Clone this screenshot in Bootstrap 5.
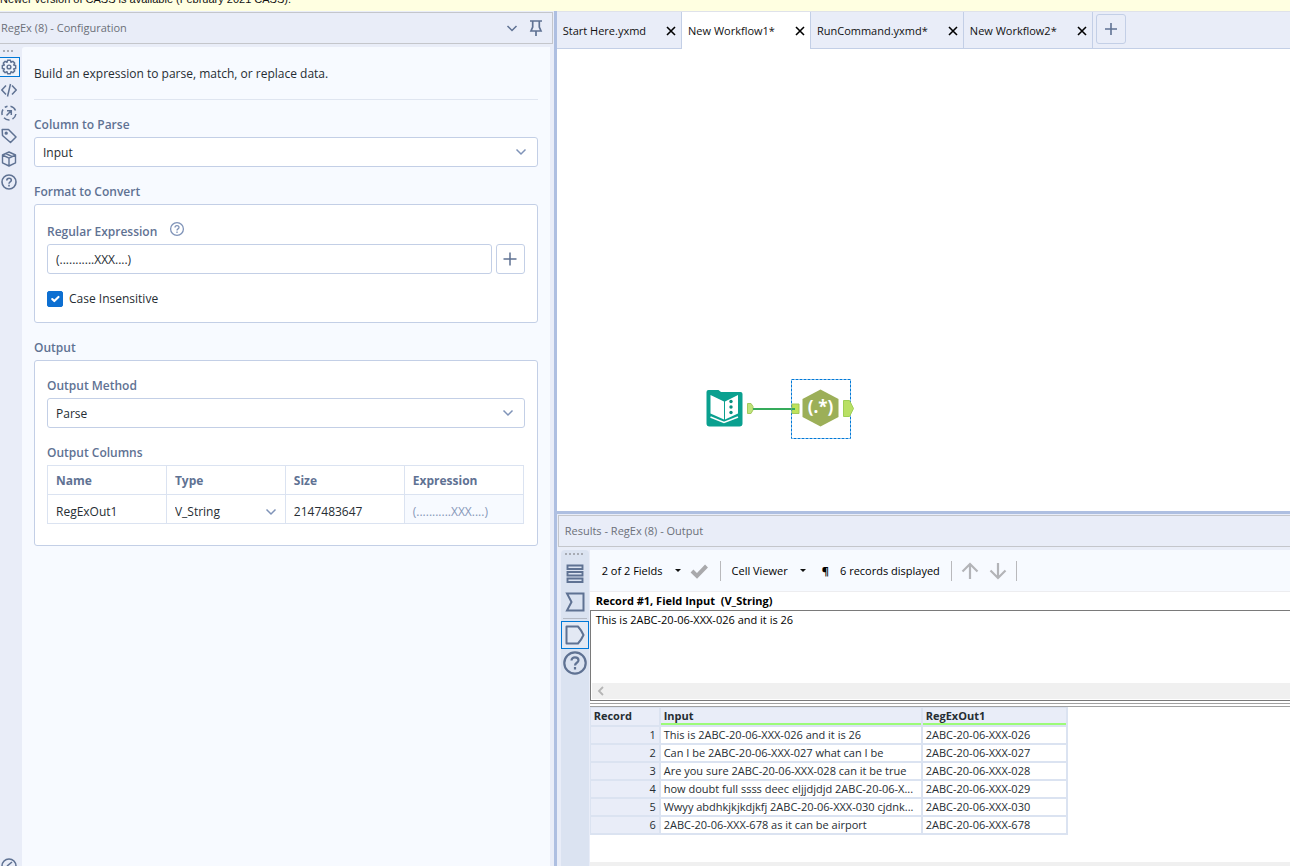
<!DOCTYPE html>
<html lang="en">
<head>
<meta charset="utf-8">
<meta name="viewport" content="width=device-width, initial-scale=1">
<title>Workflow Designer</title>
<link href="https://cdn.jsdelivr.net/npm/bootstrap@5.3.0/dist/css/bootstrap.min.css" rel="stylesheet">
<style>
:root{--chrome:#e9edf8;--soft:#f7faff;--line:#c3cfe6;--cell:#dbe3f1;--slate:#5f7293;--splitter:#aebfe1;--focus:#0078d7}
body{font-family:"Open Sans","Noto Sans",sans-serif;font-size:12px;line-height:20px;color:#262d33;background:#fff}
button{color:inherit}
svg{display:block;flex:none}
.notice{height:11px;background:#ffffe1;font:11px/13px "Liberation Sans",sans-serif;color:#111}
.notice span{margin-top:-7px}
.config-pane{flex:0 0 calc(43% + 2px);background:var(--chrome);border-right:3px solid var(--splitter)}
.pane-title{height:32px;border:1px solid #c4c6cb;color:#6c7078;font-size:11px}
.config-pane .pane-title{border-left:0;margin:1px 1px 3px 0;padding-left:1px}
.icon-btn{border:0;background:none;padding:0;line-height:1}
.side-tools{width:22px;color:var(--slate)}
.side-tools .icon-btn{width:20px;height:20px;margin-bottom:3px;border:1px solid transparent;border-left:0;display:flex;align-items:center;padding:0 0 0 1px}
.side-tools .icon-btn.active{border-color:var(--focus);background:#eef3fb}
.settings{background:var(--soft);padding:17px 12px;margin-right:4px;border-radius:3px 0 0 0}
.settings hr{margin:15px 0 0;border-color:#dfe5f0;opacity:1}
.field-label{display:block;font-weight:600;color:var(--slate);margin:15px 0 2px}
.group-box{background:#fff;border:1px solid var(--line);border-radius:3px;padding:0 12px}
.group-head{padding-top:16px}
.group-head .field-label{margin-top:1px}
.settings .form-control,.settings .form-select{height:30px;font-size:12px;line-height:20px;padding:5px 8px 3px;border:1px solid var(--line);border-radius:3px;color:#262d33;background-color:#fff}
.settings .form-control{padding:4px 8px}
.settings .form-select{background-image:url("data:image/svg+xml,%3Csvg xmlns='http://www.w3.org/2000/svg' viewBox='0 0 12 12'%3E%3Cpath d='M1.5 3.5 6 8l4.500-4.500' fill='none' stroke='%237f93b8' stroke-width='1.500'/%3E%3C/svg%3E");background-size:12px 12px;background-position:right 10px center}
.settings .form-check-input{width:16px;height:16px;margin:0;border-radius:2px;flex:none}
.settings .form-check-input:checked{background-color:#0d6fd1;border-color:#0d6fd1}
.check-row{gap:6px;padding:15px 0 13px}
.add-btn{width:30px;height:30px;border:1px solid var(--line);border-radius:3px;color:var(--slate);display:flex;align-items:center;justify-content:center;background:none;padding:0}
.settings .add-btn{width:29px}
.columns-table{table-layout:fixed;width:calc(100% - 1px);border-collapse:collapse;margin-bottom:21px}
.columns-table th,.columns-table td{border:1px solid var(--cell);height:29px;padding:2px 8px 0;line-height:20px}
.columns-table th{color:var(--slate);font-weight:700}
.columns-table td{padding-top:6px}
.columns-table .form-select{border:0;height:20px;padding:0;background-position:right 0 center;background-color:transparent}
.columns-table .calc{background:var(--soft);color:#8798b9}
.tab-strip{height:38px;background:var(--chrome);border-bottom:1px solid var(--line);border-top:1px solid #dfe2ea;color:#111;font-size:11px}
.doc-tab{height:37px;padding:0 5px 0 6px;border-right:1px solid var(--line);gap:20px}
.doc-tab.active{background:#fff}
.tab-strip .add-btn{margin:2px 3px}
.canvas-tool{position:absolute}
.results{flex:0 0 41.5%;background:var(--chrome);border-top:3px solid var(--splitter)}
.results .pane-title{margin:1px 0 3px 1px;border-right:0;padding-left:6px}
.result-tools{width:28px;margin-left:4px;background:var(--cell);color:var(--slate);border-radius:4px 4px 0 0}
.result-tools .icon-btn{width:28px;height:28px;display:flex;align-items:center;justify-content:center}
.result-tools .icon-btn.active{border:1px solid var(--focus);background:#e3e9f4}
.result-tools .divider{margin:2px 0}
.result-main{margin-left:1px;background:#fff;color:#000;font-size:11px}
.result-bar{height:42px;background:var(--soft);border-bottom:1px solid #ededf0;padding-left:12px}
.menu-btn{gap:12px}
.gap-x{margin:0 11px}
.rule-v{width:1px;height:20px;background:#b9b9bc}
.caret{border:3px solid transparent;border-top-color:#111;border-bottom:0}
.cell-title{font-weight:700;height:18px;line-height:18px;padding-left:6px}
.cell-view{border:1px solid #7a7a7a;border-right:0;height:91px;padding:0 0 1px 1px}
.cell-view textarea{border:0;resize:none;outline:0;padding:0 4px;line-height:18px;display:block;overflow:hidden}
.scroll-track{height:16px;background:#f0f0f0}
.grid-top{height:4px;margin-top:2px;border:1px solid #a0a0a0;border-width:1px 0}
.data-grid{table-layout:fixed;width:478px;border-collapse:separate;border-spacing:0;color:#262d33;border-left:1px solid var(--cell);border-top:1px solid var(--cell)}
.data-grid th,.data-grid td{height:18px;line-height:16px;padding:0 3px;border-right:2px solid var(--cell);border-bottom:2px solid var(--cell);overflow:hidden;white-space:nowrap;text-overflow:ellipsis;font-weight:400}
.data-grid thead th{font-weight:700;background:var(--chrome);height:19px;vertical-align:top}
.data-grid thead th+th{box-shadow:inset 0 -2px 0 #9cfb78}
.data-grid tbody th{background:var(--chrome);text-align:right}
.foot-strip{height:4px;background:#f0f0f0}
</style>
</head>
<body class="vh-100 d-flex flex-column overflow-hidden">
<div class="notice overflow-hidden text-nowrap flex-shrink-0 d-flex align-items-start"><span>Newer version of CASS is available (February 2021 CASS).</span></div>
<div class="d-flex flex-grow-1 overflow-hidden">

<section class="config-pane d-flex flex-column" aria-label="Configuration">
  <header class="pane-title d-flex align-items-center flex-shrink-0">
    <span class="flex-grow-1">RegEx (8) - Configuration</span>
    <button class="icon-btn me-2" aria-label="Collapse"><svg width="16" height="16" fill="none" stroke="#5f7293" stroke-width="1.500"><path d="M3.500 6 8 10.500 12.500 6"/></svg></button>
    <button class="icon-btn me-2" aria-label="Pin"><svg width="16" height="18" fill="none" stroke="#5f7293" stroke-width="1.700"><path d="M2 2h12M4.700 2v6L3 12h10l-1.700-4V2M8 12v5"/></svg></button>
  </header>
  <div class="d-flex flex-grow-1 overflow-hidden">
    <nav class="side-tools d-flex flex-column flex-shrink-0" aria-label="Configuration views">
      <svg class="mb-1" width="18" height="6" fill="#a7abb4"><path d="M3 3h2v2H3zM7 3h2v2H7zM11 3h2v2h-2z"/></svg>
      <button class="icon-btn active" aria-label="Settings"><svg width="16" height="16" viewBox="0 0 24 24" fill="none" stroke="currentColor" stroke-width="2.200" stroke-linejoin="round"><circle cx="12" cy="12" r="2.800"/><path d="m9.800 2-.8 3-2.800-1.500-2.700 2.700L5 9l-3 .8v4.400l3 .8-1.500 2.800 2.700 2.700L9 19l.8 3h4.400l.8-3 2.800 1.500 2.700-2.700L19 15l3-.8V9.800L19 9l1.500-2.800-2.700-2.700L15 5l-.8-3z"/></svg></button>
      <button class="icon-btn" aria-label="XML view"><svg width="16" height="16" fill="none" stroke="currentColor" stroke-width="1.500"><path d="M5 3.500.8 8 5 12.500M11 3.500 15.200 8 11 12.500M9.500 2l-3 12.500"/></svg></button>
      <button class="icon-btn" aria-label="Events"><svg width="16" height="16" fill="none" stroke="currentColor" stroke-width="1.500"><path d="M9.500 1.200a7 7 0 0 1 5 4.300M14.900 9a7 7 0 0 1-3.400 5M8.500 15a7 7 0 0 1-5.500-2.200M1.200 10a7 7 0 0 1 .8-5.500M3.800 2.400A7 7 0 0 1 6.500 1.200M5.500 10.500l4.500-4.500M6 5.800h4.300v4.300"/></svg></button>
      <button class="icon-btn" aria-label="Annotation"><svg width="16" height="16" fill="none" stroke="currentColor" stroke-width="1.500" stroke-linejoin="round"><path d="M1.200 1.500h6.300l7.500 7.500-5.500 5.500-8-7z"/><circle cx="5.200" cy="5.200" r=".9" fill="currentColor"/></svg></button>
      <button class="icon-btn" aria-label="Package"><svg width="16" height="16" fill="none" stroke="currentColor" stroke-width="1.400" stroke-linejoin="round"><path d="m8 1 6.500 3v7.800L8 15l-6.500-3.200V4zM1.500 4 8 7.200 14.500 4M8 7.200V15M4.700 2.500l6.500 3.200"/></svg></button>
      <button class="icon-btn" aria-label="Help"><svg width="16" height="16" fill="none" stroke="currentColor" stroke-width="1.600"><circle cx="8" cy="8" r="7"/><path d="M5.800 6.500C5.800 3.400 10.300 3.600 10.300 6.200 10.300 8 8 7.800 8 9.700M8 10.800v1.600"/></svg></button>
      <svg class="mt-auto" width="18" height="9" fill="none" stroke="currentColor" stroke-width="1.600"><circle cx="9" cy="9" r="7"/><path d="m7 9 5-4"/></svg>
    </nav>
    <form class="settings flex-grow-1 overflow-hidden">
      <div class="intro">Build an expression to parse, match, or replace data.</div>
      <hr>
      <label class="field-label" for="col">Column to Parse</label>
      <select class="form-select" id="col"><option>Input</option></select>
      <div class="field-label">Format to Convert</div>
      <div class="group-box">
        <div class="group-head d-flex">
          <label class="field-label" for="rx">Regular Expression</label>
          <svg class="ms-2" width="22" height="16" viewBox="-4 0 22 16" fill="none" stroke="#7f93b8" stroke-width="1.300"><circle cx="8" cy="8" r="6.400"/><path d="M6 6.500C6 4 10 4 10 6.400 10 8 8 7.800 8 9.500M8 10.600v1.400"/></svg>
        </div>
        <div class="d-flex gap-1">
          <input class="form-control" id="rx" value="(...........XXX....)">
          <button type="button" class="add-btn flex-shrink-0" aria-label="Insert"><svg width="14" height="14" stroke="currentColor" stroke-width="1.500"><path d="M7 .5v13M.5 7h13"/></svg></button>
        </div>
        <div class="check-row d-flex align-items-center">
          <input class="form-check-input" type="checkbox" id="ci" checked>
          <label for="ci">Case Insensitive</label>
        </div>
      </div>
      <div class="field-label">Output</div>
      <div class="group-box">
        <label class="field-label" for="method">Output Method</label>
        <select class="form-select" id="method"><option>Parse</option></select>
        <div class="field-label">Output Columns</div>
        <table class="columns-table">
          <thead><tr><th>Name</th><th>Type</th><th>Size</th><th>Expression</th></tr></thead>
          <tbody><tr><td>RegExOut1</td><td><select class="form-select" aria-label="Type"><option>V_String</option></select></td><td>2147483647</td><td class="calc">(...........XXX....)</td></tr></tbody>
        </table>
      </div>
    </form>
  </div>
</section>

<main class="flex-grow-1 d-flex flex-column overflow-hidden">
  <nav class="tab-strip d-flex flex-shrink-0 text-nowrap" aria-label="Open workflows">
    <div class="doc-tab d-flex align-items-center"><span>Start Here.yxmd</span><button class="icon-btn" aria-label="Close"><svg width="10" height="10" stroke="#000" stroke-width="1.600"><path d="m1 1 8 8M9 1 1 9"/></svg></button></div>
    <div class="doc-tab active d-flex align-items-center"><span>New Workflow1*</span><button class="icon-btn" aria-label="Close"><svg width="10" height="10" stroke="#000" stroke-width="1.600"><path d="m1 1 8 8M9 1 1 9"/></svg></button></div>
    <div class="doc-tab d-flex align-items-center"><span>RunCommand.yxmd*</span><button class="icon-btn" aria-label="Close"><svg width="10" height="10" stroke="#000" stroke-width="1.600"><path d="m1 1 8 8M9 1 1 9"/></svg></button></div>
    <div class="doc-tab d-flex align-items-center"><span>New Workflow2*</span><button class="icon-btn" aria-label="Close"><svg width="10" height="10" stroke="#000" stroke-width="1.600"><path d="m1 1 8 8M9 1 1 9"/></svg></button></div>
    <button class="add-btn" aria-label="New workflow"><svg width="14" height="14" stroke="currentColor" stroke-width="1.600"><path d="M7 1v12M1 7h12"/></svg></button>
  </nav>
  <div class="flex-grow-1 position-relative overflow-hidden">
    <svg class="canvas-tool" style="left:149px;top:330px" width="149" height="60" viewBox="0 0 149 60">
      <g transform="translate(-.5 -.5)">
      <path d="M1 13.500q0-2 2-2h10l2.500 2h19.500q2 0 2 2V45q0 3-3 3H4q-3 0-3-3z" fill="#0aa08f"/>
      <path d="M5 16.500 18.500 23v18L5 35zM19.500 23 32.500 16.500V35l-13 6z" fill="#fff"/>
      <path d="M5 38.500 18.500 44l14-5.500" fill="none" stroke="#fff" stroke-width="1.500"/>
      <g fill="#0a8f80"><circle cx="25.500" cy="23" r="1.700"/><circle cx="25.500" cy="28.500" r="1.700"/><circle cx="25.500" cy="34" r="1.700"/></g>
      </g>
      <path d="M41.500 24.500h3.500l2 3v3.500l-2 3.500h-3.500z" fill="#bfe37a" stroke="#a4c95c"/>
      <path d="M47 30h41" stroke="#35ab5b" stroke-width="2"/>
      <rect x="85.500" y=".5" width="59" height="59" fill="none" stroke="#0078d7" stroke-dasharray="3 1"/>
      <path d="M86 25h7v9.500h-7z" fill="#bfe35a" stroke="#a4c95c"/><path d="M86 30h3" stroke="#35ab5b" stroke-width="2"/>
      <path d="m114.500 10.500 18 9.500v18l-18 9.500-18-9.500V20z" fill="#9caf58"/>
      <text x="114.500" y="34" text-anchor="middle" font-size="17" font-weight="700" fill="#fff">(.*)</text>
      <path d="M137.500 21.500h6l4 8-4 8h-6z" fill="#b9e064" stroke="#9fcf55"/>
    </svg>
  </div>
  <section class="results d-flex flex-column overflow-hidden" aria-label="Results">
    <header class="pane-title d-flex align-items-center flex-shrink-0">Results - RegEx (8) - Output</header>
    <div class="d-flex flex-grow-1 overflow-hidden">
      <nav class="result-tools flex-shrink-0" aria-label="Result views">
        <svg width="28" height="10" fill="#a7abb4"><path d="M4 3h2v2H4zM8 3h2v2H8zM12 3h2v2h-2zM16 3h2v2h-2zM20 3h2v2h-2z"/></svg>
        <button class="icon-btn" aria-label="Messages"><svg width="18" height="20" fill="none" stroke="currentColor" stroke-width="1.900"><path d="M1.500 1.500h15V5h-15zM1.500 8h15v3.500h-15zM1.500 14.500h15V18h-15z"/></svg></button>
        <button class="icon-btn" aria-label="Input anchor"><svg width="20" height="20" fill="none" stroke="currentColor" stroke-width="2"><path d="M2 1.500h16.500v17H2L6.500 10z"/></svg></button>
        <svg class="divider" width="28" height="1" stroke="#b5bac5"><path d="M2 .5h24"/></svg>
        <button class="icon-btn active" aria-label="Output anchor"><svg width="20" height="20" fill="none" stroke="currentColor" stroke-width="2" stroke-linejoin="round"><path d="M1.500 1.500H13q3.500 4 5.500 8.500-2 4.500-5.500 8.500H1.500z"/></svg></button>
        <button class="icon-btn" aria-label="Help"><svg width="24" height="24" fill="none" stroke="currentColor" stroke-width="2.200"><circle cx="12" cy="12" r="10.700"/><path d="M8.500 9.500C8.500 5 15.500 5.500 15.500 9.300 15.500 12 12 11.500 12 14.500M12 16v2.500"/></svg></button>
      </nav>
      <div class="result-main flex-grow-1 d-flex flex-column overflow-hidden">
        <div class="result-bar d-flex align-items-center flex-shrink-0 text-nowrap">
          <button class="icon-btn menu-btn d-flex align-items-center">2 of 2 Fields <span class="caret"></span></button>
          <button class="icon-btn ms-2" aria-label="Apply"><svg width="20" height="16" fill="none" stroke="#a9a9ac" stroke-width="4"><path d="m3 8 5 5L17.500 3"/></svg></button>
          <span class="rule-v gap-x"></span>
          <button class="icon-btn menu-btn d-flex align-items-center">Cell Viewer <span class="caret"></span></button>
          <button class="icon-btn ms-3 fw-bold" aria-label="Show whitespace">¶</button>
          <span class="gap-x">6 records displayed</span>
          <span class="rule-v"></span>
          <button class="icon-btn ms-2" aria-label="Previous"><svg width="20" height="18" fill="none" stroke="#b3b4b8" stroke-width="2.200"><path d="M10 17V2.500M2.500 9.500 10 2l7.500 7.500"/></svg></button>
          <button class="icon-btn mx-2" aria-label="Next"><svg width="20" height="18" fill="none" stroke="#b3b4b8" stroke-width="2.200"><path d="M10 1v14.500M2.500 8.500 10 16l7.500-7.500"/></svg></button>
          <span class="rule-v"></span>
        </div>
        <label class="cell-title flex-shrink-0" for="cellview">Record #1, Field Input &nbsp;(V_String)</label>
        <div class="cell-view d-flex flex-column flex-shrink-0">
          <textarea id="cellview" class="w-100 flex-grow-1" readonly>This is 2ABC-20-06-XXX-026 and it is 26</textarea>
          <div class="scroll-track d-flex align-items-center ps-1"><svg width="10" height="10" fill="none" stroke="#b5b5b5" stroke-width="1.800"><path d="M7 1 3 5l4 4"/></svg></div>
        </div>
        <div class="grid-top flex-shrink-0"></div>
        <table class="data-grid">
          <colgroup><col style="width:70px"><col style="width:262px"><col></colgroup>
          <thead><tr><th>Record</th><th>Input</th><th>RegExOut1</th></tr></thead>
          <tbody>
            <tr><th>1</th><td>This is 2ABC-20-06-XXX-026 and it is 26</td><td>2ABC-20-06-XXX-026</td></tr>
            <tr><th>2</th><td>Can I be 2ABC-20-06-XXX-027 what can I be</td><td>2ABC-20-06-XXX-027</td></tr>
            <tr><th>3</th><td>Are you sure 2ABC-20-06-XXX-028 can it be true</td><td>2ABC-20-06-XXX-028</td></tr>
            <tr><th>4</th><td>how doubt full ssss deec eljjdjdjd 2ABC-20-06-X...</td><td>2ABC-20-06-XXX-029</td></tr>
            <tr><th>5</th><td>Wwyy abdhkjkjkdjkfj 2ABC-20-06-XXX-030 cjdnk...</td><td>2ABC-20-06-XXX-030</td></tr>
            <tr><th>6</th><td>2ABC-20-06-XXX-678 as it can be airport</td><td>2ABC-20-06-XXX-678</td></tr>
          </tbody>
        </table>
        <div class="foot-strip mt-auto flex-shrink-0"></div>
      </div>
    </div>
  </section>
</main>
</div>
<script src="https://cdn.jsdelivr.net/npm/bootstrap@5.3.0/dist/js/bootstrap.bundle.min.js"></script>
</body>
</html>
